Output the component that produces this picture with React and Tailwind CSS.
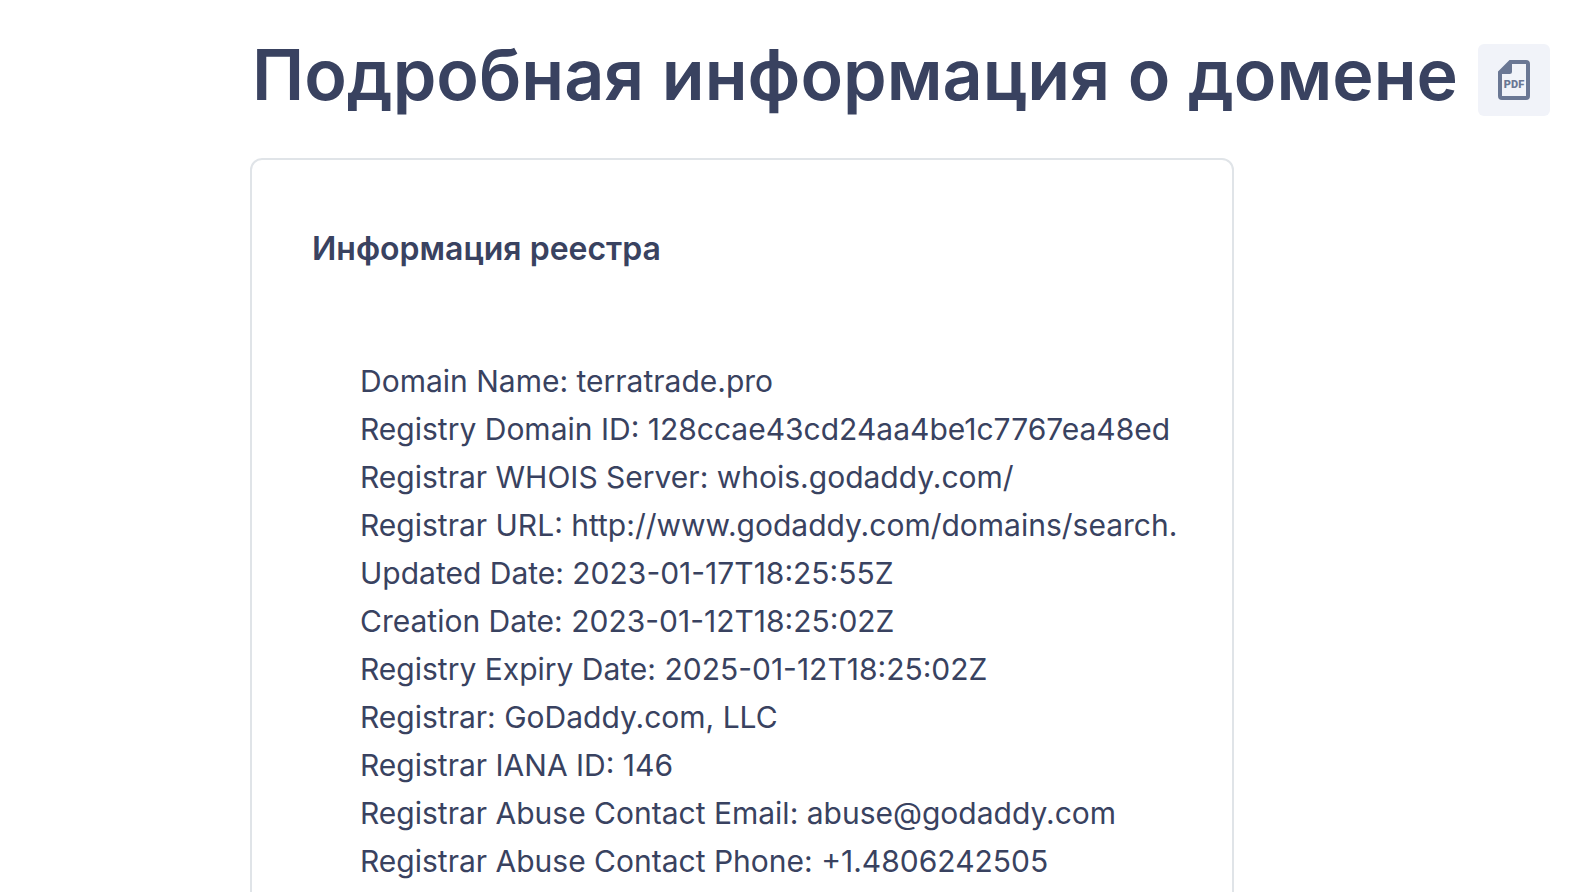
import React from 'react';

const registryRows = [
  { label: 'Domain Name', value: 'terratrade.pro' },
  { label: 'Registry Domain ID', value: '128ccae43cd24aa4be1c7767ea48ed' },
  { label: 'Registrar WHOIS Server', value: 'whois.godaddy.com/' },
  { label: 'Registrar URL', value: 'http://www.godaddy.com/domains/search.' },
  { label: 'Updated Date', value: '2023-01-17T18:25:55Z' },
  { label: 'Creation Date', value: '2023-01-12T18:25:02Z' },
  { label: 'Registry Expiry Date', value: '2025-01-12T18:25:02Z' },
  { label: 'Registrar', value: 'GoDaddy.com, LLC' },
  { label: 'Registrar IANA ID', value: '146' },
  { label: 'Registrar Abuse Contact Email', value: 'abuse@godaddy.com' },
  { label: 'Registrar Abuse Contact Phone', value: '+1.4806242505' },
];

const PdfIcon = () => (
  <svg viewBox="0 0 32 40" className="h-10 w-8" fill="#6a7794" aria-hidden="true">
    <path
      fillRule="evenodd"
      d="M11.500 0H28a4 4 0 0 1 4 4V36a4 4 0 0 1-4 4H4a4 4 0 0 1-4-4V11.500ZM14 4V11.500a2.500 2.500 0 0 1-2.500 2.500H4V36H28V4Z"
    />
    <text
      x="16"
      y="28"
      textAnchor="middle"
      className="font-[Roboto,sans-serif] text-[11px] font-black"
    >
      PDF
    </text>
  </svg>
);

export default function App() {
  return (
    <div className="h-screen overflow-hidden bg-white pl-[250px] pr-8 pt-11 text-[#394260] font-['Inter',sans-serif]">
      <header className="flex items-start gap-5 pl-0.5">
        <h1 className="whitespace-nowrap text-[70px] leading-[62px] font-semibold">
          Подробная информация о домене
        </h1>
        <button
          type="button"
          aria-label="PDF"
          className="flex h-[72px] w-[72px] shrink-0 items-center justify-center rounded-md bg-[#f1f3f9]"
        >
          <PdfIcon />
        </button>
      </header>

      <section className="mt-[42px] mr-[316px] rounded-xl border-2 border-[#e0e4e8] px-[60px] pt-[67px] pb-16">
        <h2 className="text-[32px] leading-[44px] font-semibold">Информация реестра</h2>
        <div className="mt-[86px] ml-12">
          {registryRows.map(row => (
            <p key={row.label} className="whitespace-nowrap text-[30px] leading-[48px]">
              {row.label}: {row.value}
            </p>
          ))}
        </div>
      </section>
    </div>
  );
}
